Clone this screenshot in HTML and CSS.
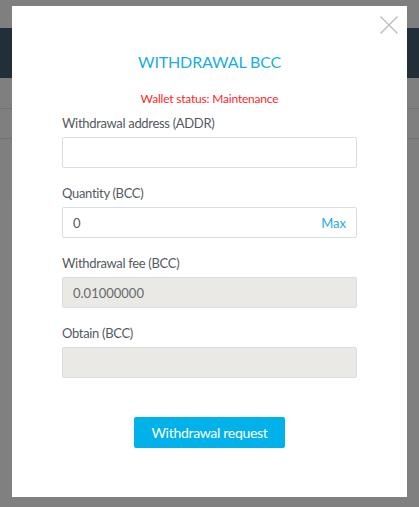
FILE: index.html
```html
<!DOCTYPE html>
<html lang="en">
<head>
<meta charset="utf-8">
<title>Withdrawal BCC</title>
<link rel="stylesheet" href="styles.css">
</head>
<body>
<div class="page">
  <div class="topbar"></div>
  <div class="header"></div>
  <div class="row row-a"></div>
  <div class="row row-b"></div>
  <div class="row row-c"></div>
</div>
<div class="modal">
  <button class="close" type="button" aria-label="Close">
    <svg width="18" height="18" viewBox="0 0 18 18"><path d="M0.5 0.5L17.5 17.5M17.5 0.5L0.5 17.5" stroke="#bdbdbd" stroke-width="1.4" fill="none"/></svg>
  </button>
  <h2 class="title">WITHDRAWAL BCC</h2>
  <p class="status">Wallet status: Maintenance</p>
  <div class="field">
    <label class="label">Withdrawal address (ADDR)</label>
    <div class="box"><input class="inp" type="text"></div>
  </div>
  <div class="field">
    <label class="label">Quantity (BCC)</label>
    <div class="box"><input class="inp" type="text" value="0"><span class="max">Max</span></div>
  </div>
  <div class="field">
    <label class="label">Withdrawal fee (BCC)</label>
    <div class="box box-disabled"><input class="inp" type="text" value="0.01000000" disabled></div>
  </div>
  <div class="field">
    <label class="label">Obtain (BCC)</label>
    <div class="box box-disabled"><input class="inp" type="text" disabled></div>
  </div>
  <div class="actions">
    <button class="submit" type="button">Withdrawal request</button>
  </div>
</div>
</body>
</html>
```
FILE: styles.css
```css
html, body {
  margin: 0;
  padding: 0;
}
body {
  background: #808080;
  font-family: "Lato", "Noto Sans", sans-serif;
  width: 419px;
  height: 507px;
  overflow: hidden;
  position: relative;
}
.page {
  display: flex;
  flex-direction: column;
}
.topbar {
  height: 28px;
  background: #7f7f7f;
}
.header {
  height: 50px;
  background: #232f38;
}
.row {
  background: #7f7f7f;
  border-bottom: 1px solid #727272;
}
.row-a { height: 30px; }
.row-b { height: 29px; }
.row-c { height: 60px; border-bottom: none; }

.modal {
  position: absolute;
  left: 12px;
  top: 6px;
  width: 395px;
  height: 491px;
  box-sizing: border-box;
  background: #ffffff;
  padding: 0 50px;
}
.close {
  position: absolute;
  right: 9px;
  top: 10px;
  width: 18px;
  height: 18px;
  padding: 0;
  border: 0;
  background: transparent;
  display: block;
}
.close svg { display: block; }
.title {
  margin: 46px 0 0;
  font-size: 16px;
  line-height: 20px;
  font-weight: 400;
  color: #1aade4;
  text-align: center;
  letter-spacing: -0.15px;
}
.status {
  margin: 19px 0 0;
  font-size: 12px;
  line-height: 16px;
  color: #ff1f1f;
  text-align: center;
  letter-spacing: -0.2px;
}
.field {
  margin-top: 7px;
  margin-bottom: 16px;
}
.field + .field { margin-top: 0; }
.label {
  display: block;
  font-size: 13px;
  line-height: 18px;
  color: #555a5f;
  margin-bottom: 5px;
  letter-spacing: -0.32px;
}
.box {
  height: 31px;
  box-sizing: border-box;
  border: 1px solid #d6dee6;
  border-radius: 2px;
  background: #fff;
  display: flex;
  align-items: center;
  padding: 0 10px;
}
.box-disabled {
  background: #ebe9e5;
  border-color: #d9dde1;
}
.inp {
  flex: 1;
  min-width: 0;
  border: 0;
  outline: 0;
  background: transparent;
  padding: 0;
  font-family: inherit;
  font-size: 13px;
  color: #555a5f;
}
.inp:disabled { color: #666a6e; -webkit-text-fill-color: #666a6e; }
.max {
  font-size: 13px;
  color: #1aade4;
}
.actions {
  display: flex;
  justify-content: center;
  margin-top: 39px;
}
.submit {
  width: 151px;
  height: 31px;
  border: 0;
  border-radius: 2px;
  background: #00b1ea;
  color: #fff;
  font-family: inherit;
  font-size: 14px;
  letter-spacing: -0.3px;
  padding: 0;
}
```
